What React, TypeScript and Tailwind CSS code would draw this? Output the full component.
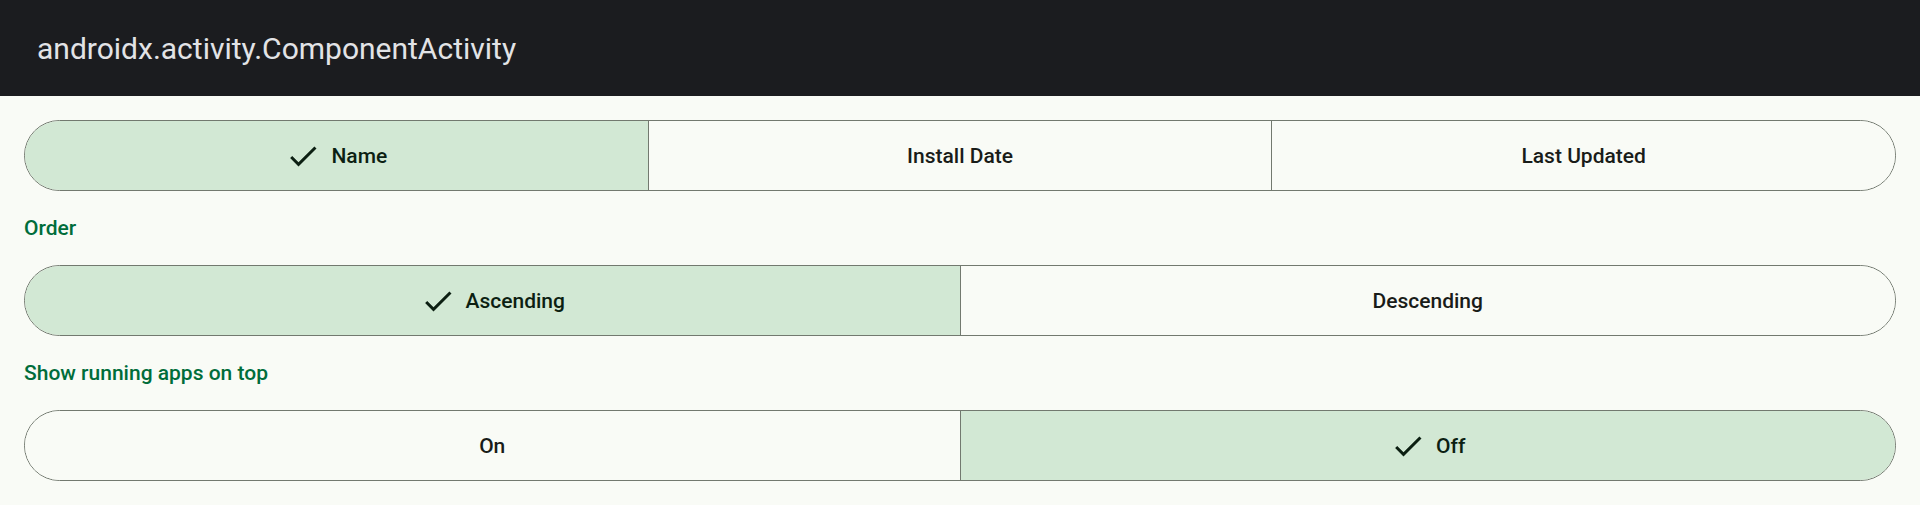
import { useState } from "react";

function Check() {
  return (
    <svg viewBox="0 0 24 24" className="w-[36px] h-[36px] shrink-0" fill="currentColor">
      <path d="M9 16.17L4.83 12l-1.42 1.41L9 19 21 7l-1.41-1.41z" />
    </svg>
  );
}

function Segmented({
  options,
  value,
  onChange,
}: {
  options: string[];
  value: number;
  onChange: (i: number) => void;
}) {
  return (
    <div className="flex h-[71px] rounded-full border-[1.5px] border-[#72796f] overflow-hidden">
      {options.map((opt, i) => {
        const selected = i === value;
        return (
          <button
            key={opt}
            onClick={() => onChange(i)}
            className={
              "flex-1 flex items-center justify-center gap-[10px] text-[21px] font-medium " +
              (i > 0 ? "border-l-[1.5px] border-[#72796f] " : "") +
              (selected ? "bg-[#d2e8d4] text-[#0c1f12]" : "bg-[#f9fbf6] text-[#191c19]")
            }
          >
            {selected && <Check />}
            <span className="pt-[3px]">{opt}</span>
          </button>
        );
      })}
    </div>
  );
}

export default function App() {
  const [sort, setSort] = useState(0);
  const [order, setOrder] = useState(0);
  const [running, setRunning] = useState(1);

  return (
    <div className="min-h-[505px] bg-[#f9fbf6]" style={{ fontFamily: "Roboto, 'Noto Sans', sans-serif" }}>
      <div className="h-[96px] bg-[#1b1c1f] flex items-center px-[37px]">
        <h1 className="text-[30px] text-[#e2e3e6]">androidx.activity.ComponentActivity</h1>
      </div>

      <div className="px-6 pt-6">
        <Segmented options={["Name", "Install Date", "Last Updated"]} value={sort} onChange={setSort} />

        <div className="h-[74px] flex items-center pt-[2px] text-[21px] font-medium text-[#006d3b]">Order</div>
        <Segmented options={["Ascending", "Descending"]} value={order} onChange={setOrder} />

        <div className="h-[74px] flex items-center pt-[2px] text-[21px] font-medium text-[#006d3b]">
          Show running apps on top
        </div>
        <Segmented options={["On", "Off"]} value={running} onChange={setRunning} />
      </div>
    </div>
  );
}
